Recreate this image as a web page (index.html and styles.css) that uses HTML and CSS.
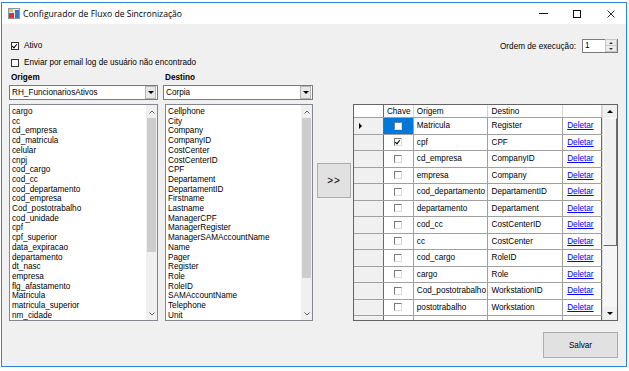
FILE: index.html
```html
<!DOCTYPE html>
<html lang="pt-BR">
<head>
    <meta charset="UTF-8">
    <title>Configurador de Fluxo de Sincronização</title>
    <link rel="stylesheet" href="styles.css">
</head>
<body>
    <div class="window">
        <!-- Title bar -->
        <div class="titlebar">
            <svg class="app-icon" viewBox="0 0 12 11">
                <rect x="0.5" y="0.5" width="11" height="10" fill="#e4e8ef" stroke="#8b97a8"/>
                <rect x="1" y="1" width="4" height="3" fill="#f3c13a"/>
                <rect x="1" y="5" width="5" height="5" fill="#d8342a"/>
                <rect x="7" y="2" width="4" height="8" fill="#3a76c8"/>
            </svg>
            <span class="title">Configurador de Fluxo de Sincronização</span>
            <div class="controls">
                <span class="ctl"><i class="ctl-min"></i></span>
                <span class="ctl"><i class="ctl-max"></i></span>
                <span class="ctl">
                    <svg width="8" height="8" viewBox="0 0 8 8"><path d="M0.5 0.5L7.5 7.5M7.5 0.5L0.5 7.5" stroke="#111" stroke-width="0.9"/></svg>
                </span>
            </div>
        </div>

        <!-- Form -->
        <div class="client">
            <div class="top">
                <div class="checks">
                    <label class="check"><span class="box checked"></span>Ativo</label>
                    <label class="check"><span class="box"></span>Enviar por email log de usuário não encontrado</label>
                </div>
                <div class="order">
                    <span>Ordem de execução:</span>
                    <div class="spin">
                        <span class="spin-value">1</span>
                        <div class="spin-btns">
                            <span class="spin-btn"><i class="tri-up small"></i></span>
                            <span class="spin-btn"><i class="tri-down small"></i></span>
                        </div>
                    </div>
                </div>
            </div>

            <div class="main">
                <div class="field origem">
                    <div class="field-label">Origem</div>
                    <div class="combo"><span class="combo-text">RH_FuncionariosAtivos</span><span class="combo-btn"><i class="tri-down"></i></span></div>
                    <div class="listbox" id="origemList"></div>
                </div>
                <div class="field destino">
                    <div class="field-label">Destino</div>
                    <div class="combo"><span class="combo-text">Corpia</span><span class="combo-btn"><i class="tri-down"></i></span></div>
                    <div class="listbox" id="destinoList"></div>
                </div>
                <button class="move">&gt;&gt;</button>
                <div class="grid">
                    <div class="grid-body">
                        <div class="grid-head">
                            <span class="c-rowhead"></span>
                            <span class="c-chave">Chave</span>
                            <span class="c-origem">Origem</span>
                            <span class="c-destino">Destino</span>
                            <span class="c-del"></span>
                        </div>
                        <div id="gridRows"></div>
                    </div>
                    <div class="vscroll">
                        <span class="vs-btn"><i class="tri-up"></i></span>
                        <span class="vs-thumb"></span>
                        <span class="vs-track"></span>
                        <span class="vs-btn"><i class="tri-down"></i></span>
                    </div>
                </div>
            </div>

            <div class="footer">
                <button class="save">Salvar</button>
            </div>
        </div>
    </div>

    <script>
        const origem = ["cargo", "cc", "cd_empresa", "cd_matricula", "celular", "cnpj", "cod_cargo", "cod_cc",
            "cod_departamento", "cod_empresa", "Cod_postotrabalho", "cod_unidade", "cpf", "cpf_superior",
            "data_expiracao", "departamento", "dt_nasc", "empresa", "flg_afastamento", "Matricula",
            "matricula_superior", "nm_cidade"];

        const destino = ["Cellphone", "City", "Company", "CompanyID", "CostCenter", "CostCenterID", "CPF",
            "Departament", "DepartamentID", "Firstname", "Lastname", "ManagerCPF", "ManagerRegister",
            "ManagerSAMAccountName", "Name", "Pager", "Register", "Role", "RoleID", "SAMAccountName",
            "Telephone", "Unit"];

        const mapeamentos = [
            { origem: "Matricula", destino: "Register", chave: false },
            { origem: "cpf", destino: "CPF", chave: true },
            { origem: "cd_empresa", destino: "CompanyID" },
            { origem: "empresa", destino: "Company" },
            { origem: "cod_departamento", destino: "DepartamentID" },
            { origem: "departamento", destino: "Departament" },
            { origem: "cod_cc", destino: "CostCenterID" },
            { origem: "cc", destino: "CostCenter" },
            { origem: "cod_cargo", destino: "RoleID" },
            { origem: "cargo", destino: "Role" },
            { origem: "Cod_postotrabalho", destino: "WorkstationID" },
            { origem: "postotrabalho", destino: "Workstation" },
            { origem: "", destino: "" }
        ];

        // List boxes
        function renderList(id, items, thumb) {
            document.getElementById(id).innerHTML = `
                <ul class="items">${items.map(i => `<li>${i}</li>`).join('')}</ul>
                <div class="scrollbar">
                    <span class="sb-btn"><svg width="6" height="4" viewBox="0 0 6 4"><path d="M0.5 3.5L3 1L5.5 3.5" fill="none" stroke="#606060"/></svg></span>
                    <span class="sb-thumb" style="height:${thumb}px"></span>
                    <span class="sb-track"></span>
                    <span class="sb-btn"><svg width="6" height="4" viewBox="0 0 6 4"><path d="M0.5 0.5L3 3L5.5 0.5" fill="none" stroke="#606060"/></svg></span>
                </div>`;
        }
        renderList('origemList', origem, 134);
        renderList('destinoList', destino, 160);

        // Grid rows
        document.getElementById('gridRows').innerHTML = mapeamentos.map((m, index) => `
            <div class="grid-row">
                <span class="c-rowhead">${index === 0 ? '<i class="row-arrow"></i>' : ''}</span>
                <span class="c-chave ${index === 0 ? 'selected' : ''}"><span class="cbox ${m.chave ? 'checked' : ''}"></span></span>
                <span class="c-origem">${m.origem}</span>
                <span class="c-destino">${m.destino}</span>
                <span class="c-del">${m.origem ? '<a href="#">Deletar</a>' : ''}</span>
            </div>`).join('');
    </script>
</body>
</html>
```

FILE: styles.css
```css
/* Page */
body {
    margin: 0;
    width: 629px;
    height: 371px;
    overflow: hidden;
    background-color: #ffffff;
    font-family: "Liberation Sans", Arial, sans-serif;
    font-size: 8.2px;
    color: #000;
}
.window {
    margin: 2px 0 0 1px;
    width: 626px;
    height: 365px;
    box-sizing: border-box;
    border: 1px solid #2e86d6;
    display: flex;
    flex-direction: column;
}

/* Title bar */
.titlebar {
    flex: none;
    height: 21px;
    background-color: #fff;
    display: flex;
    align-items: center;
}
.app-icon {
    width: 12px;
    height: 11px;
    margin-left: 6px;
}
.title {
    margin-left: 3px;
    font-family: "Open Sans", "Noto Sans", sans-serif;
    font-size: 8.6px;
    color: #000;
}
.controls {
    margin-left: auto;
    display: flex;
    height: 100%;
}
.ctl {
    width: 34px;
    padding-left: 4px;
    box-sizing: border-box;
    display: flex;
    align-items: center;
    justify-content: center;
}
.ctl-min {
    width: 9px;
    height: 1px;
    background-color: #111;
}
.ctl-max {
    width: 8px;
    height: 8px;
    box-sizing: border-box;
    border: 1px solid #111;
}

/* Client area */
.client {
    flex: 1;
    background-color: #f0f0f0;
    padding: 0 8px 0 7px;
    display: flex;
    flex-direction: column;
}
.top {
    display: flex;
    justify-content: space-between;
    padding-top: 13px;
}
.check {
    height: 17px;
    display: flex;
    align-items: center;
}
.box {
    width: 8px;
    height: 8px;
    box-sizing: border-box;
    border: 1px solid #333;
    background-color: #fff;
    margin: 0 5px 0 2px;
    position: relative;
}
.box.checked::after,
.cbox.checked::after {
    content: "";
    position: absolute;
    left: 1px;
    top: 0;
    width: 2px;
    height: 4px;
    border: solid #000;
    border-width: 0 1.3px 1.3px 0;
    transform: rotate(40deg);
}
.order {
    margin-top: 2px;
    height: 14px;
    display: flex;
    align-items: center;
    gap: 6px;
}
.spin {
    width: 36px;
    height: 14px;
    box-sizing: border-box;
    border: 1px solid #7a7a7a;
    background-color: #fff;
    display: flex;
}
.spin-value {
    flex: 1;
    padding-left: 2px;
    line-height: 12px;
}
.spin-btns {
    width: 12px;
    display: flex;
    flex-direction: column;
}
.spin-btn {
    flex: 1;
    background-color: #ececec;
    border: 1px solid #c8c8c8;
    margin-top: -1px;
    display: flex;
    align-items: center;
    justify-content: center;
}

/* Triangles */
.tri-up,
.tri-down {
    width: 0;
    height: 0;
    border-left: 3px solid transparent;
    border-right: 3px solid transparent;
}
.tri-up { border-bottom: 3px solid #000; }
.tri-down { border-top: 3px solid #000; }
.tri-up.small { border-width: 0 2px 2px; border-bottom-color: #333; }
.tri-down.small { border-width: 2px 2px 0; border-top-color: #333; }

/* Main area */
.main {
    display: flex;
    align-items: flex-start;
}
.field {
    display: flex;
    flex-direction: column;
}
.origem {
    width: 149px;
    margin-right: 5px;
}
.destino {
    width: 150px;
}
.field-label {
    height: 13px;
    line-height: 13px;
    padding-left: 2px;
    font-weight: bold;
}
.combo {
    margin-top: 1px;
    height: 15px;
    box-sizing: border-box;
    border: 1px solid #7a7a7a;
    background-color: #fff;
    display: flex;
    align-items: center;
}
.combo-text {
    flex: 1;
    padding-left: 2px;
}
.combo-btn {
    width: 9px;
    height: 11px;
    margin-right: 1px;
    border: 1px solid #b5b5b5;
    background-color: #e8e8e8;
    display: flex;
    align-items: center;
    justify-content: center;
}
.listbox {
    margin-top: 4px;
    height: 217px;
    box-sizing: border-box;
    border: 1px solid #828790;
    background-color: #fff;
    display: flex;
}
.destino .listbox {
    margin-left: 2px;
}
.items {
    flex: 1;
    margin: 0;
    padding: 2px 0 0 2px;
    list-style: none;
    line-height: 9.7px;
    white-space: nowrap;
    overflow: hidden;
}
.scrollbar {
    width: 11px;
    background-color: #f0f0f0;
    display: flex;
    flex-direction: column;
}
.sb-btn {
    height: 13px;
    flex: none;
    display: flex;
    align-items: center;
    justify-content: center;
}
.sb-thumb {
    flex: none;
    margin: 0 1px;
    background-color: #cdcdcd;
}
.sb-track {
    flex: 1;
}

/* Buttons */
button {
    font-family: "Liberation Sans", Arial, sans-serif;
    background-color: #e1e1e1;
    border: 1px solid #adadad;
    color: #000;
    padding: 0;
}
.move {
    margin: 92px 0 0 4px;
    width: 34px;
    height: 35px;
    font-size: 10px;
    letter-spacing: 1px;
}
.footer {
    display: flex;
    justify-content: flex-end;
    margin-top: 11px;
}
.save {
    width: 75px;
    height: 26px;
    font-size: 8.2px;
}

/* Data grid */
.grid {
    margin: 33px 0 0 2px;
    width: 265px;
    height: 217px;
    box-sizing: border-box;
    border: 1px solid #646464;
    background-color: #ababab;
    display: flex;
    overflow: hidden;
}
.grid-body {
    width: 249px;
    overflow: hidden;
}
.grid-head,
.grid-row {
    display: flex;
    box-sizing: border-box;
    border-bottom: 1px solid #a0a0a0;
}
.grid-head {
    height: 13px;
    background-color: #fff;
}
.grid-row {
    height: 16.5px;
    background-color: #fff;
}
.grid-head > span,
.grid-row > span {
    box-sizing: border-box;
    border-right: 1px solid #a0a0a0;
    padding-left: 3px;
    display: flex;
    align-items: center;
    white-space: nowrap;
    overflow: hidden;
}
.grid-head > span {
    border-right-color: #d5d5d5;
}
.c-rowhead { width: 30px; }
.c-chave { width: 30px; }
.c-origem { width: 75px; }
.c-destino { width: 75px; }
.c-del { width: 39px; }
.grid-row > .c-del { border-right-color: #6a6a6a; }
.grid-row > .c-rowhead {
    background-color: #f0f0f0;
    border-right-color: #6a6a6a;
    padding-left: 5px;
}
.grid-head > .c-rowhead {
    border-right-color: #6a6a6a;
}
.grid-row > .c-chave {
    justify-content: center;
    padding-left: 0;
}
.c-chave.selected {
    background-color: #0078d7;
}
.row-arrow {
    width: 0;
    height: 0;
    border-left: 3px solid #000;
    border-top: 3px solid transparent;
    border-bottom: 3px solid transparent;
}
.cbox {
    width: 8px;
    height: 8px;
    box-sizing: border-box;
    border: 1px solid;
    border-color: #7a7a7a #dadada #dadada #7a7a7a;
    background-color: #fff;
    position: relative;
}
.c-del a {
    color: #0000ff;
    text-decoration: underline;
    padding-left: 1px;
}
.vscroll {
    width: 14px;
    background-color: #f6f6f6;
    border-left: 1px solid #dcdcdc;
    display: flex;
    flex-direction: column;
}
.vs-btn {
    flex: none;
    height: 13px;
    background-color: #f0f0f0;
    display: flex;
    align-items: center;
    justify-content: center;
}
.vs-thumb {
    flex: none;
    height: 128px;
    box-sizing: border-box;
    background-color: #f0f0f0;
    border: 1px solid;
    border-color: #fff #6a6a6a #6a6a6a #fff;
}
.vs-track {
    flex: 1;
}
```
